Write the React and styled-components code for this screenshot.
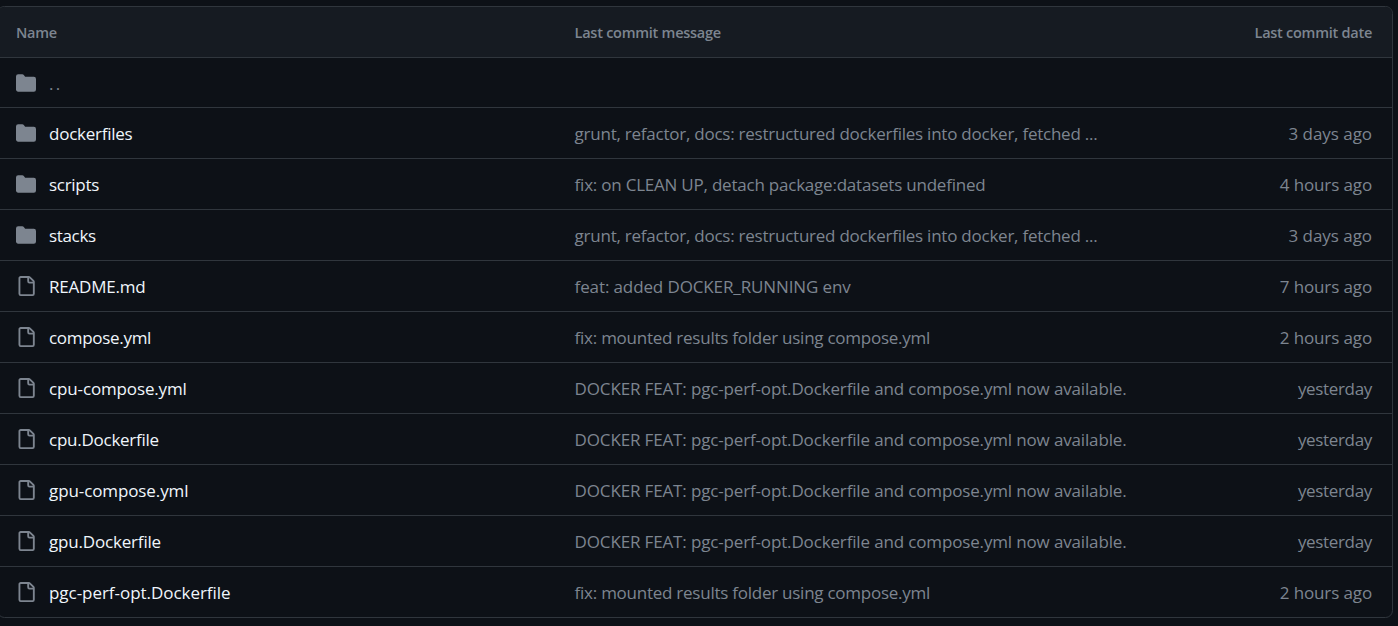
import React from 'react';
import styled, { createGlobalStyle } from 'styled-components';

const GlobalStyle = createGlobalStyle`
  *, *::before, *::after { box-sizing: border-box; }
  body {
    margin: 0;
    background: #0d1117;
    color: #7d8590;
    font-family: "Segoe UI", "Open Sans", "Noto Sans", sans-serif;
    font-size: 17px;
    overflow: hidden;
  }
`;

const Table = styled.div`
  display: flex;
  flex-direction: column;
  margin: 6px 5px 0 -3px;
  border: 1px solid #30363d;
  border-radius: 7.5px;
  overflow: hidden;
`;

const Row = styled.div`
  display: grid;
  grid-template-columns: 558.6px 1fr 160px;
  align-items: center;
  height: ${({ $short }) => ($short ? 50 : 51)}px;
  padding: 0 20px 0 18px;
  border-top: 1px solid #30363d;
`;

const HeaderRow = styled(Row)`
  height: 50px;
  border-top: 0;
  background: #161b22;
  font-size: 14.5px;
  font-weight: 600;
`;

const Label = styled.span`
  padding-top: 2px;
  white-space: nowrap;
  line-height: 24px;
  letter-spacing: ${({ $track = 0 }) => $track}px;
`;

const NameCell = styled.div`
  display: flex;
  align-items: center;
  gap: 13px;
`;

const FileName = styled(Label)`
  color: #f0f6fc;
`;

const ParentLink = styled(Label)`
  color: #7d8590;
`;

const DateLabel = styled(Label)`
  text-align: right;
`;

const Icon = styled.svg`
  display: block;
  flex: none;
  width: 20px;
  height: 20px;
  fill: #7d8590;
`;

const FolderIcon = () => (
  <Icon viewBox="0 0 16 16">
    <path d="M1.75 1A1.75 1.75 0 0 0 0 2.75v10.5C0 14.216.784 15 1.75 15h12.5A1.75 1.75 0 0 0 16 13.25v-8.5A1.75 1.75 0 0 0 14.25 3H7.5a.25.25 0 0 1-.2-.1l-.9-1.2C6.07 1.26 5.55 1 5 1H1.75Z" />
  </Icon>
);

const FileIcon = () => (
  <Icon viewBox="0 0 16 16">
    <path d="M2 1.75C2 .784 2.784 0 3.75 0h6.586c.464 0 .909.184 1.237.513l2.914 2.914c.329.328.513.773.513 1.237v9.586A1.75 1.75 0 0 1 13.25 16h-9.5A1.75 1.75 0 0 1 2 14.25Zm1.75-.25a.25.25 0 0 0-.25.25v12.5c0 .138.112.25.25.25h9.5a.25.25 0 0 0 .25-.25V6h-2.75A1.75 1.75 0 0 1 9 4.25V1.5Zm6.75.062V4.25c0 .138.112.25.25.25h2.688l-.011-.013-2.914-2.914-.013-.011Z" />
  </Icon>
);

// Each text is paired with its letter spacing in pixels.
const restructured = ['grunt, refactor, docs: restructured dockerfiles into docker, fetched ...', -0.24];
const mounted = ['fix: mounted results folder using compose.yml', -0.25];
const available = ['DOCKER FEAT: pgc-perf-opt.Dockerfile and compose.yml now available.', -0.15];
const yesterday = ['yesterday', -0.33];

const entries = [
  { folder: true, name: ['dockerfiles', -0.25], message: restructured, date: ['3 days ago', -0.05] },
  { folder: true, name: ['scripts', -0.3], message: ['fix: on CLEAN UP, detach package:datasets undefined', -0.22], date: ['4 hours ago', -0.12] },
  { folder: true, name: ['stacks', -0.34], message: restructured, date: ['3 days ago', -0.05] },
  { name: ['README.md', -0.21], message: ['feat: added DOCKER_RUNNING env', -0.12], date: ['7 hours ago', -0.12] },
  { name: ['compose.yml', -0.3], message: mounted, date: ['2 hours ago', -0.12] },
  { name: ['cpu-compose.yml', -0.14], message: available, date: yesterday },
  { name: ['cpu.Dockerfile', -0.25], message: available, date: yesterday },
  { name: ['gpu-compose.yml', -0.1], message: available, date: yesterday },
  { name: ['gpu.Dockerfile', -0.18], message: available, date: yesterday },
  { name: ['pgc-perf-opt.Dockerfile', -0.04], message: mounted, date: ['2 hours ago', -0.12] },
];

export default function App() {
  return (
    <>
      <GlobalStyle />
      <Table>
        <HeaderRow>
          <Label $track={-0.3}>Name</Label>
          <Label $track={-0.26}>Last commit message</Label>
          <DateLabel $track={-0.26}>Last commit date</DateLabel>
        </HeaderRow>
        <Row $short>
          <NameCell>
            <FolderIcon />
            <ParentLink $track={2.2}>..</ParentLink>
          </NameCell>
        </Row>
        {entries.map(({ folder, name, message, date }) => (
          <Row key={name[0]}>
            <NameCell>
              {folder ? <FolderIcon /> : <FileIcon />}
              <FileName $track={name[1]}>{name[0]}</FileName>
            </NameCell>
            <Label $track={message[1]}>{message[0]}</Label>
            <DateLabel $track={date[1]}>{date[0]}</DateLabel>
          </Row>
        ))}
      </Table>
    </>
  );
}
